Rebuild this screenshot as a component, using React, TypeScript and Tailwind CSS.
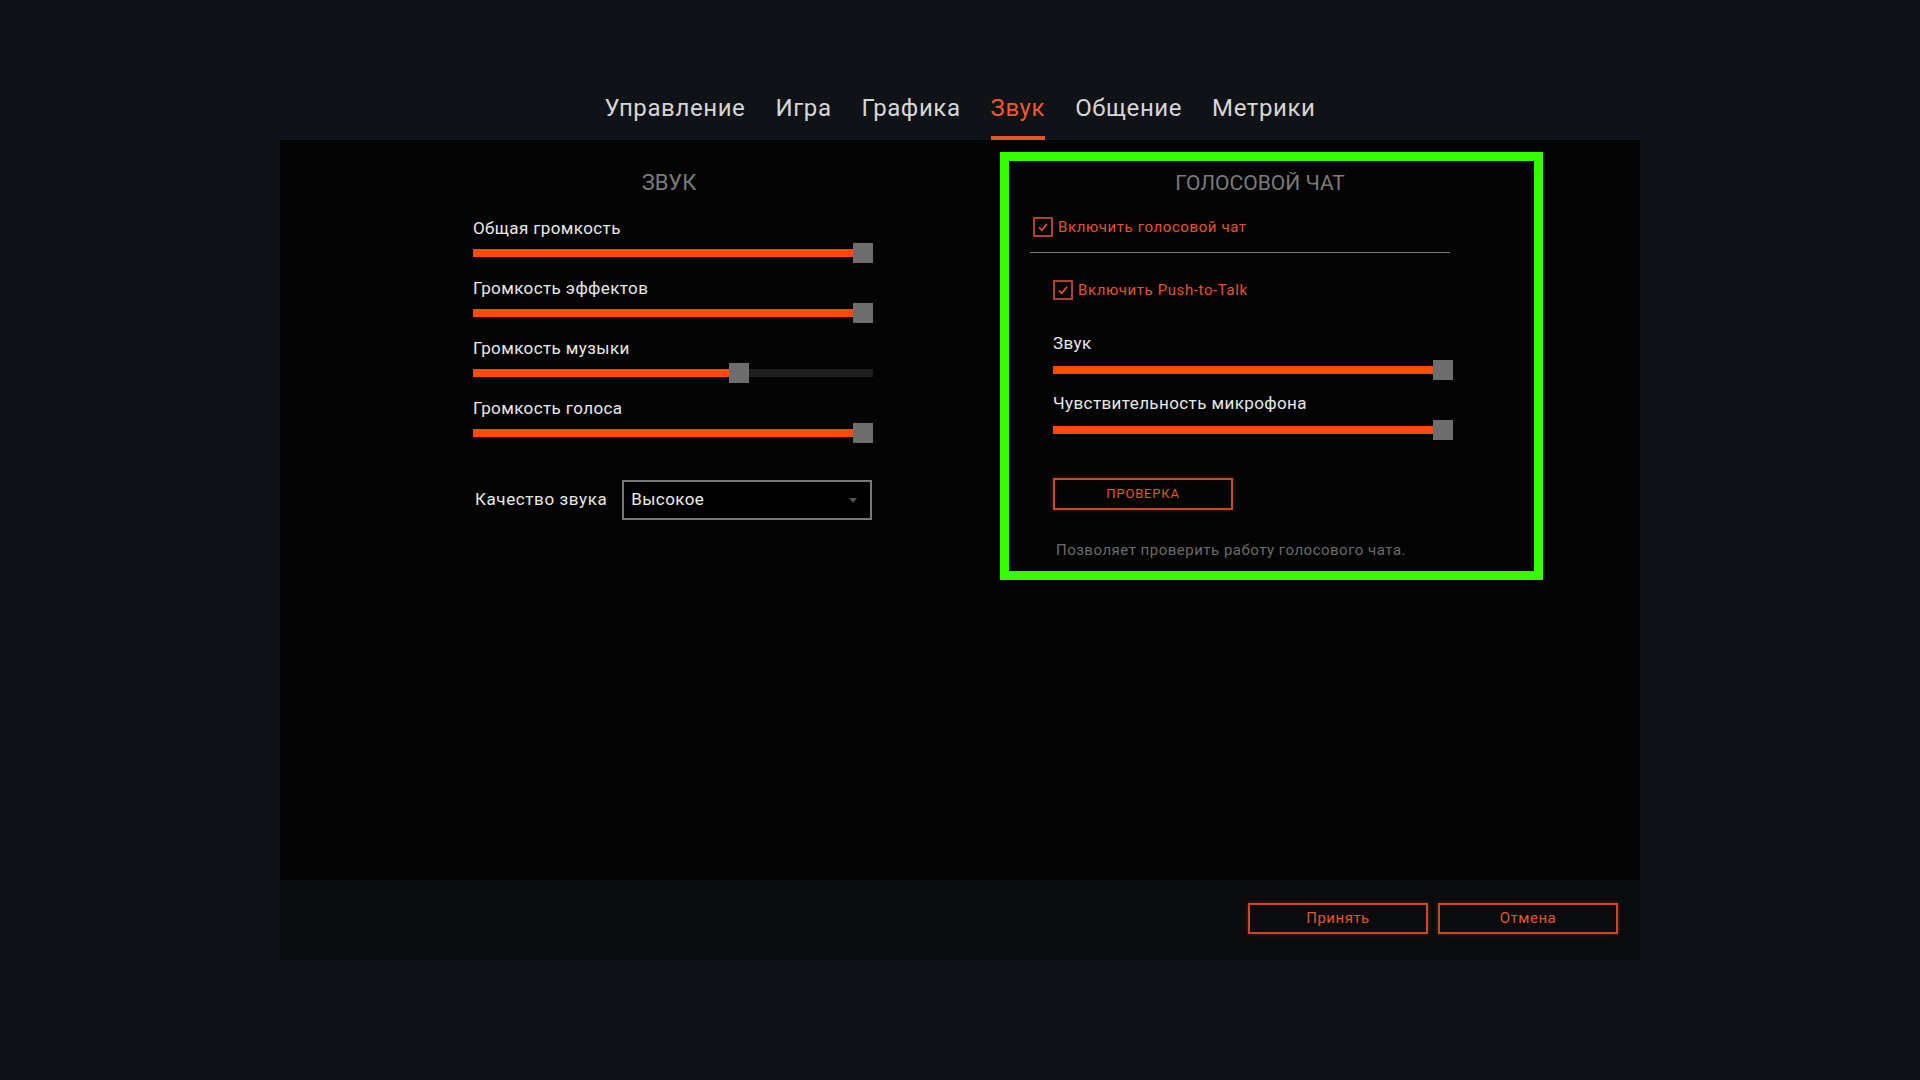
import React from 'react';

// Game settings: "Звук" tab

const tabs = ['Управление', 'Игра', 'Графика', 'Звук', 'Общение', 'Метрики'];

interface SliderProps {
    label: string;
    value: number;
    tight?: boolean;
}

// Volume slider: label on top, orange fill, square gray thumb
const Slider: React.FC<SliderProps> = ({ label, value, tight }) => {
    const thumbLeft = Math.round(value * 380);
    return (
        <div className="flex flex-col">
            <div className="text-[17px] leading-[20px] tracking-[0.4px] text-[#e8e8e8]">{label}</div>
            <div className={`relative h-5 w-[400px] ${tight ? 'mt-[5px]' : 'mt-[7px]'}`}>
                <div className="absolute inset-x-0 top-[6px] h-2 bg-[#1f1f1f]" />
                <div className="absolute left-0 top-[6px] h-2 bg-[#ff4b0a]" style={{ width: `${thumbLeft + 10}px` }} />
                <div className="absolute top-0 h-5 w-5 bg-[#6e6e6e]" style={{ left: `${thumbLeft}px` }} />
            </div>
        </div>
    );
};

interface CheckProps {
    label: string;
}

const Check: React.FC<CheckProps> = ({ label }) => (
    <div className="flex items-center gap-[5px]">
        <div className="flex h-5 w-5 items-center justify-center border-2 border-[#a9432a]">
            <svg width="12" height="12" viewBox="0 0 12 12" fill="none">
                <path d="M2 6.5 L4.8 9.2 L10 2.8" stroke="#e8552c" strokeWidth="1.6" />
            </svg>
        </div>
        <span className="text-[15px] leading-5 tracking-[0.6px] text-[#e4532b]">{label}</span>
    </div>
);

const OutlineButton: React.FC<{ children: React.ReactNode; className?: string }> = ({ children, className }) => (
    <button
        className={`flex items-center justify-center border-2 border-[#c64b2a] text-[#e2552f] shadow-[0_0_4px_rgba(255,80,30,0.35)] ${className ?? ''}`}
    >
        {children}
    </button>
);

const App: React.FC = () => {
    return (
        <div className="flex h-screen w-full flex-col items-center bg-[#0f1217] font-['Roboto',sans-serif]">
            {/* Tabs */}
            <nav className="flex gap-[30px] pt-[94px]">
                {tabs.map((t) => {
                    const active = t === 'Звук';
                    return (
                        <div
                            key={t}
                            className={`border-b-4 pb-[14px] text-[24px] leading-[28px] tracking-[0.6px] ${
                                active ? 'border-[#e8552c] text-[#ee5a2e]' : 'border-transparent text-[#d6d6d6]'
                            }`}
                        >
                            {t}
                        </div>
                    );
                })}
            </nav>

            {/* Panel */}
            <div className="flex h-[820px] w-[1360px] flex-col">
                <div className="flex flex-1 bg-[#040404] pl-[193px]">
                    {/* Left column: sound */}
                    <div className="flex w-[400px] flex-col pt-[30px]">
                        <h2 className="pr-2 text-center text-[22px] leading-[26px] text-[#7b7b7b]">ЗВУК</h2>
                        <div className="mt-[22px] flex flex-col gap-[15px]">
                            <Slider label="Общая громкость" value={1} tight />
                            <Slider label="Громкость эффектов" value={1} tight />
                            <Slider label="Громкость музыки" value={0.674} tight />
                            <Slider label="Громкость голоса" value={1} tight />
                        </div>
                        <div className="mt-[37px] flex items-center gap-[15px] pl-[2px]">
                            <span className="text-[17px] tracking-[0.6px] text-[#e8e8e8]">Качество звука</span>
                            <div className="flex h-10 w-[250px] items-center justify-between border-2 border-[#777777] bg-black pl-[7px] pr-[13px]">
                                <span className="text-[17px] tracking-[0.4px] text-[#eeeeee]">Высокое</span>
                                <div className="h-0 w-0 border-x-[4px] border-t-[5px] border-x-transparent border-t-[#555555]" />
                            </div>
                        </div>
                    </div>

                    {/* Right column: voice chat */}
                    <div className="ml-[127px] mt-3 h-[428px] w-[543px] border-[9px] border-[#33ff00] pl-[21px]">
                        <div className="flex w-[460px] flex-col pt-[9px]">
                            <h2 className="text-center text-[21px] leading-[26px] text-[#7b7b7b]">ГОЛОСОВОЙ ЧАТ</h2>
                            <div className="mt-[21px] pl-[3px]">
                                <Check label="Включить голосовой чат" />
                            </div>
                            <div className="mt-[15px] h-px w-[420px] bg-[#777777]" />
                            <div className="flex flex-col pl-[23px]">
                                <div className="mt-[27px]">
                                    <Check label="Включить Push-to-Talk" />
                                </div>
                                <div className="mt-[33px] flex flex-col gap-[13px]">
                                    <Slider label="Звук" value={1} />
                                    <Slider label="Чувствительность микрофона" value={1} />
                                </div>
                                <OutlineButton className="mt-[38px] h-8 w-[180px] text-[13px] tracking-[0.8px]">ПРОВЕРКА</OutlineButton>
                                <p className="mt-[30px] pl-[3px] text-[15px] leading-5 tracking-[0.5px] text-[#6b6b6b]">
                                    Позволяет проверить работу голосового чата.
                                </p>
                            </div>
                        </div>
                    </div>
                </div>

                {/* Bottom bar */}
                <div className="flex h-20 items-center justify-end gap-[10px] bg-[#0a0b0d] pb-[3px] pr-[22px]">
                    <OutlineButton className="h-[31px] w-[180px] text-[15px] tracking-[0.5px]">Принять</OutlineButton>
                    <OutlineButton className="h-[31px] w-[180px] text-[15px] tracking-[0.5px]">Отмена</OutlineButton>
                </div>
            </div>
        </div>
    );
};

export default App;
